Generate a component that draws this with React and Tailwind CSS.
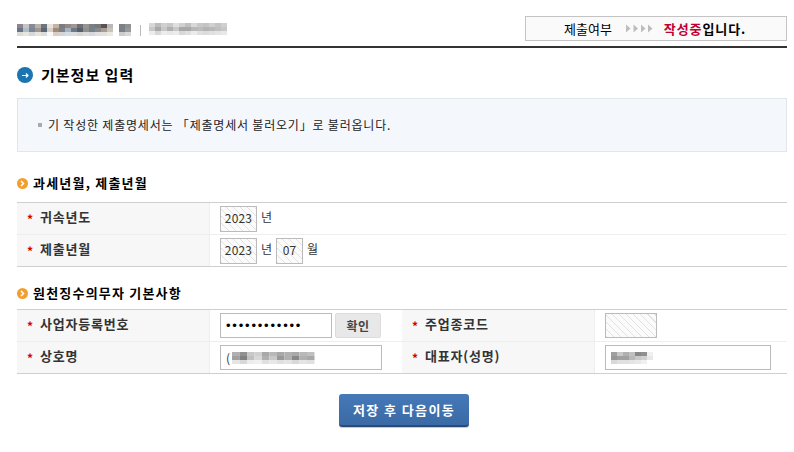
const KR = { fontFamily: '"Noto Sans CJK KR", "Liberation Sans", sans-serif' };

function Mosaic({ cols, cw, ch, cells, className = "" }) {
  const rows = Math.ceil(cells.length / cols);
  return (
    <svg width={cols * cw} height={rows * ch} className={`block shrink-0 ${className}`}>
      {cells.map((c, i) =>
        c ? (
          <rect key={i} x={(i % cols) * cw} y={Math.floor(i / cols) * ch} width={cw} height={ch} fill={c} />
        ) : null
      )}
    </svg>
  );
}

const hdr1 = ["#8a8690","#c8c4c0","#8a8a94","#b8b4a8","#6f7480","#e8e4dc","#c4b4a4","#7c7c84","#938a84","#a09890","#6d7078","#989490","#7a7e88","#787878","#5b5058","#b8b8b8",null,"#7f8080","#909090",
"#6a7484","#b0bcc8","#7c8694","#a09890","#5c6674","#d8d0c8","#a08c7c","#808088","#a4b4c4","#707a86","#585f68","#909090","#78808a","#8a8a8a","#a89c90","#c8c4bc",null,"#7a8088","#989898",
"#dcdcd4","#e8e4e0","#d4d8dc","#e8e4dc","#dcdcdc","#f8f8f8","#dcccc4","#d4d4d4","#d4dce4","#dcdcdc","#d4d4d4","#dcdcdc","#d4d8dc","#e0e0e0","#e4e0dc","#ece8e4",null,"#ccccd0","#d8d8d8"];
const hdr2 = ["#d8d8d8","#bcbcbc","#d0d0d0","#c8c8c8","#e0e0e0","#d0d0d0","#c0c0c0","#d8d8d8","#c8c8c8","#c4c4c4","#d0d0d0","#c4c4c4","#d0d0d0",
"#c8c8c8","#a8a8a8","#c8c8c8","#b0b0b0","#c8c8c8","#a8a8a8","#a8a8a8","#b8b8b8","#bcbcbc","#b4b4b4","#b8b8b8","#c0c0c0","#c8c8c8",
"#ececec","#d8d8d8","#ececec","#e8e8e8","#ececec","#d8d8d8","#e0e0e0","#ececec","#e0e0e0","#dcdcdc","#e0e0e0","#e4e4e4","#e8e8e8"];
const comp = ["#b0b0b0","#909090","#c8c8c8","#d0d0d0","#a8a8a8","#b8b8b8","#a8a8a8","#b0b0b0","#a8a8a8","#b8b8b8","#c0c0c0",
"#a0a0a0","#808080","#c0c0c0","#d8d8d8","#b0b0b0","#c8c8c8","#989898","#b0b0b0","#888888","#b0b0b0","#a8a8a8",
"#e4e4e4","#d8d8d8","#ececec","#f0f0f0","#e0e0e0","#e8e8e8","#e0e0e0","#e4e4e4","#d8d8d8","#e4e4e4","#e0e0e0"];
const rep = ["#a0a0a0","#c8c8c8","#b0b0b0","#c0c0c0","#888888","#909090","#f0f0f0",
"#989898","#a0a0a0","#a0a0a0","#b8b8b8","#c8c8c8","#d0d0d0","#e8e8e8",
"#d8d8d8","#e0e0e0","#e0e0e0","#e4e4e4","#e8e8e8","#f0f0f0","#ffffff"];

const HATCH = "bg-[repeating-linear-gradient(45deg,#e2e2e2_0,#e2e2e2_1px,#fbfbfb_1px,#fbfbfb_5px)]";

function Label({ children }) {
  return (
    <div className="w-[193px] shrink-0 flex items-center pl-[10px] pb-[3px] bg-[#f7f7f7] border-r border-[#eeeeee] text-[#333] font-bold text-[13px]">
      <span className="text-[#d40000] font-bold text-[12px] w-[13px] shrink-0 leading-none mt-[3px]">*</span>
      <span className="tracking-[0.8px]">{children}</span>
    </div>
  );
}

function RO({ w, children }) {
  return (
    <div className={`${w} h-[26px] border border-[#bbbbbb] flex items-center justify-center pb-[2px] text-[12px] tracking-[0.2px] text-[#333] ${HATCH}`}>
      {children}
    </div>
  );
}

function SubHead({ children, className }) {
  return (
    <div className={`flex items-center gap-[5px] font-bold text-[13px] text-black ${className}`}>
      <span className="w-[11px] h-[11px] rounded-full bg-[#f0a030] flex items-center justify-center">
        <svg width="7" height="7" viewBox="0 0 7 7"><path d="M2 1l2.5 2.5L2 6" fill="none" stroke="#fff" strokeWidth="1.5" /></svg>
      </span>
      <span className="tracking-[1.2px]">{children}</span>
    </div>
  );
}

export default function App() {
  return (
    <div style={KR} className="w-[794px] h-[452px] bg-white pl-[17px] pr-[7px] overflow-hidden">
      <div className="h-[48px] border-b-2 border-[#333] flex items-start justify-between">
        <div className="flex items-center mt-[24px]">
          <Mosaic cols={19} cw={6} ch={4} cells={hdr1} />
          <span className="w-px h-[11px] bg-[#bbb] ml-[9px] mr-[8px]" />
          <Mosaic cols={13} cw={6} ch={4} cells={hdr2} className="mt-[-2px]" />
        </div>
        <div className="mt-[16px] w-[262px] h-[25px] border border-[#c4c4c4] bg-[#fafafa] flex items-center pl-[38px] text-[13px] text-black">
          <span>제출여부</span>
          <svg width="28" height="9" viewBox="0 0 28 9" className="ml-[14px]">
            {[0, 7.5, 15, 22].map((x) => (
              <path key={x} d={`M${x} 0.5l4.5 4-4.5 4z`} fill="#bdbdbd" />
            ))}
          </svg>
          <span className="ml-[10px] font-bold tracking-[0.9px]">
            <span className="text-[#c00030]">작성중</span>입니다.
          </span>
        </div>
      </div>

      <div className="mt-[18px] flex items-center gap-[8px] h-[18px] font-bold text-[15px] text-black">
        <span className="w-[16px] h-[16px] rounded-full bg-[#1c74b0] flex items-center justify-center">
          <svg width="9" height="9" viewBox="0 0 9 9"><path d="M1 4.5h6M5 2.5l2 2-2 2" fill="none" stroke="#fff" strokeWidth="1.2" /></svg>
        </span>
        <span className="tracking-[1px]">기본정보 입력</span>
      </div>

      <div className="mt-[14px] h-[54px] bg-[#f4f7fb] border border-[#e0e6ec] flex items-center pl-[20px] text-[12px] text-[#222]">
        <span className="w-[4px] h-[4px] bg-[#aaa] mr-[6px]" />
        <span className="tracking-[0.8px]">기 작성한 제출명세서는 「제출명세서 불러오기」로 불러옵니다.</span>
      </div>

      <SubHead className="mt-[22px] h-[18px]">과세년월, 제출년월</SubHead>

      <div className="mt-[10px] border-t border-b border-[#cfcfcf]">
        <div className="flex h-[32px] border-b border-[#eeeeee]">
          <Label>귀속년도</Label>
          <div className="flex items-center pl-[10px] gap-[4px] text-[12px] text-[#333]">
            <RO w="w-[37px]">2023</RO>
            <span className="pb-[3px]">년</span>
          </div>
        </div>
        <div className="flex h-[31px]">
          <Label>제출년월</Label>
          <div className="flex items-center pl-[10px] gap-[4px] text-[12px] text-[#333]">
            <RO w="w-[37px]">2023</RO>
            <span className="pb-[3px]">년</span>
            <RO w="w-[27px]">07</RO>
            <span className="pb-[3px]">월</span>
          </div>
        </div>
      </div>

      <SubHead className="mt-[17px] h-[18px]">원천징수의무자 기본사항</SubHead>

      <div className="mt-[7px] border-t border-b border-[#cfcfcf]">
        <div className="flex h-[32px] border-b border-[#eeeeee]">
          <Label>사업자등록번호</Label>
          <div className="w-[192px] shrink-0 flex items-center pl-[10px]">
            <div className="w-[112px] h-[25px] border border-[#bbbbbb] flex items-center pl-[5px] text-[13px] text-black tracking-[1.8px] font-['Liberation_Sans']">
              ••••••••••••
            </div>
            <div className="ml-[3px] w-[46px] h-[25px] rounded-[2px] bg-[#e8e8e8] border border-[#dddddd] flex items-center justify-center font-bold text-[12px] tracking-[0.5px] text-[#444]">
              확인
            </div>
          </div>
          <Label>주업종코드</Label>
          <div className="flex items-center pl-[10px]">
            <div className={`w-[52px] h-[25px] border border-[#bbbbbb] ${HATCH}`} />
          </div>
        </div>
        <div className="flex h-[31px]">
          <Label>상호명</Label>
          <div className="w-[192px] shrink-0 flex items-center pl-[10px]">
            <div className="w-[162px] h-[25px] border border-[#bbbbbb] flex items-center pl-[5px] text-[12px] text-[#333]">
              <span className="mr-[2px]">(</span>
              <Mosaic cols={11} cw={7.5} ch={4} cells={comp} />
            </div>
          </div>
          <Label>대표자(성명)</Label>
          <div className="flex items-center pl-[10px]">
            <div className="w-[166px] h-[25px] border border-[#bbbbbb] flex items-center pl-[5px]">
              <Mosaic cols={7} cw={6} ch={4} cells={rep} />
            </div>
          </div>
        </div>
      </div>

      <div className="mt-[20px] pl-[4px] flex justify-center">
        <div className="w-[130px] h-[33px] rounded-[3px] bg-linear-to-b from-[#4679b8] to-[#3a6aa6] border-b-2 border-[#2c4a75] shadow-[0_1px_0_#c8c8c8] flex items-center justify-center font-bold text-[13px] text-white tracking-[1.4px]">
          저장 후 다음이동
        </div>
      </div>
    </div>
  );
}
